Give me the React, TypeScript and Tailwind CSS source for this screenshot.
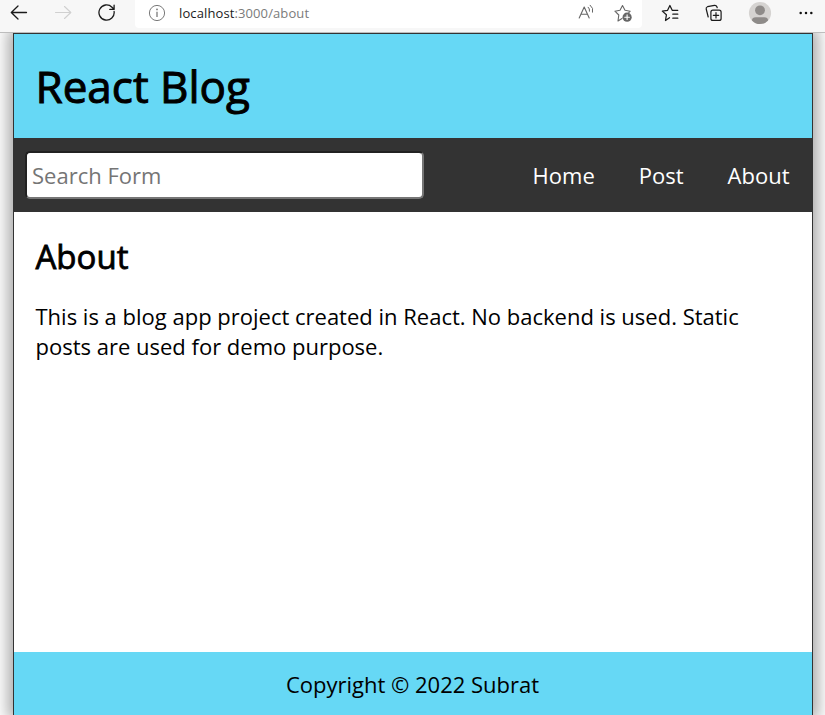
import React from "react";

function BrowserBar() {
  const line = { fill: "none", stroke: "#1b1b1b", strokeWidth: 1.1, strokeLinecap: "round", strokeLinejoin: "round" } as const;
  return (
    <div className="relative flex h-[33px] shrink-0 items-start border-b border-[#bdbdbd] bg-[#f7f7f7]">
      <svg className="ml-[10px] h-[26px] w-[18px]" viewBox="0 0 18 26" {...line} strokeWidth={1.3}>
        <path d="M16.5 12.5H1.5M8 6L1.3 12.5L8 19" />
      </svg>
      <svg className="ml-[27px] h-[26px] w-[18px]" viewBox="0 0 18 26" {...line} stroke="#d0d0d0">
        <path d="M0.5 12.5H15.7M9.5 6.5L15.8 12.5L9.5 18.5" />
      </svg>
      <svg className="ml-[25px] h-[26px] w-[18px]" viewBox="0 0 18 26" {...line} strokeWidth={1.3}>
        <path d="M16.1 11.5A7.6 7.6 0 1 1 14 7.2L15.8 9M16.1 5.2V9.4H11.8" />
      </svg>
      <div className="ml-[19px] flex h-[28px] w-[507px] items-start rounded-b bg-white">
        <svg className="ml-[13px] h-[26px] w-[18px]" viewBox="0 0 18 26" fill="none" stroke="#7a7a7a">
          <circle cx="9" cy="13" r="7.6" />
          <path d="M9 11.7V17" strokeWidth="1.3" />
          <circle cx="9" cy="9.4" r="0.9" fill="#7a7a7a" stroke="none" />
        </svg>
        <span className="ml-[13px] w-[140px] whitespace-nowrap text-[13px] leading-[26px] tracking-[0.11px] text-[#1b1b1b]">
          localhost<span className="text-[#7b7b7b]">:3000/about</span>
        </span>
        <svg className="ml-[259px] h-[26px] w-[18px]" viewBox="0 0 18 26" {...line} stroke="#666">
          <path d="M1.2 18L6.2 7L11.2 18M2.9 14.3H9.5" />
          <path d="M10.2 7.2Q12 8.7 11.5 11.2M12.2 5.2Q15.8 8 14.6 12.2" strokeWidth="1" />
        </svg>
        <svg className="ml-[18px] h-[26px] w-[20px]" viewBox="0 0 20 26" {...line} stroke="#666">
          <path d="M8 18.5L4 21L4.8 15L0.9 11.2L6 10.3L8.5 5.5L11 10.3L16.2 11.2L14.8 12.5" />
          <circle cx="13.1" cy="17.2" r="4.6" fill="#666" stroke="none" />
          <path d="M10.8 17.2H15.4M13.1 14.9V19.5" stroke="#fff" />
        </svg>
      </div>
      <svg className="ml-[19px] h-[26px] w-[18px]" viewBox="0 0 18 26" {...line} strokeWidth={1.25}>
        <path d="M8.5 17.7L4.5 20.5L5.4 14.8L1.3 11.1L6.6 10.3L8.9 5.5L11.2 10.3H16.8M11.8 14.2H16.8M11.8 18.2H16.8" />
      </svg>
      <svg className="ml-[26px] h-[26px] w-[18px]" viewBox="0 0 18 26" {...line} strokeWidth={1.2}>
        <rect x="5.9" y="10.2" width="10.2" height="10.2" rx="2" />
        <path d="M11 12.7V18M8.3 15.3H13.7M3.2 17L1.2 9Q0.8 7.3 2.5 6.7L9.5 5.3Q11.3 5.1 11.9 6.8L12.2 7.7" />
      </svg>
      <svg className="ml-[25px] h-[26px] w-[24px]" viewBox="0 0 24 26">
        <circle cx="12" cy="13" r="11.1" fill="#d5d3d1" />
        <circle cx="12" cy="10.3" r="4.9" fill="#8e8b89" />
        <path d="M3.9 20.4Q4.2 17.2 7.8 17.2H16.3Q19.8 17.2 20.1 20.4Q16.8 24.1 12 24.1Q7.2 24.1 3.9 20.4Z" fill="#8e8b89" />
      </svg>
      <svg className="ml-[27px] h-[26px] w-[16px]" viewBox="0 0 16 26" fill="#111">
        <circle cx="1.7" cy="13" r="1.25" />
        <circle cx="7" cy="13" r="1.25" />
        <circle cx="12.3" cy="13" r="1.25" />
      </svg>
    </div>
  );
}

export default function App() {
  return (
    <div className="flex h-[715px] w-[825px] flex-col overflow-hidden bg-white font-['Open_Sans',sans-serif] text-[22px] leading-[30px] text-black">
      <BrowserBar />
      <div className="flex min-h-0 flex-1 flex-col overflow-hidden px-[13px] pr-[12px]">
        <div className="flex min-h-0 flex-1 flex-col border border-b-0 border-[#333] bg-white shadow-[0_0_15px_5px_rgba(0,0,0,0.35)]">
          <header className="flex h-[104px] shrink-0 items-center bg-[#66d8f5] pl-[21.5px]">
            <h1 className="text-[44px] leading-[60px] font-normal [-webkit-text-stroke:1px_black]">React Blog</h1>
          </header>
          <nav className="flex h-[74px] shrink-0 items-center justify-between bg-[#333] pl-[11px] text-white">
            <input
              type="text"
              placeholder="Search Form"
              className="h-[48px] w-[399px] rounded-[5px] border-2 border-t-[#222] border-r-[#767676] border-b-[#767676] border-l-[#222] bg-white px-[5px] py-0 text-black placeholder:text-[#757575]"
            />
            <ul className="flex gap-[44px] pr-[22.5px]">
              <li>Home</li>
              <li>Post</li>
              <li>About</li>
            </ul>
          </nav>
          <main className="flex-1 px-[21.5px] pt-[22px]">
            <h2 className="text-[33px] leading-[45px] font-normal [-webkit-text-stroke:0.8px_black]">About</h2>
            <p className="mt-[22px]">This is a blog app project created in React. No backend is used. Static posts are used for demo purpose.</p>
          </main>
          <footer className="flex h-[63px] shrink-0 items-center justify-center bg-[#66d8f5] pt-[1px] pr-[1px]">
            <p>Copyright © 2022 Subrat</p>
          </footer>
        </div>
      </div>
    </div>
  );
}
